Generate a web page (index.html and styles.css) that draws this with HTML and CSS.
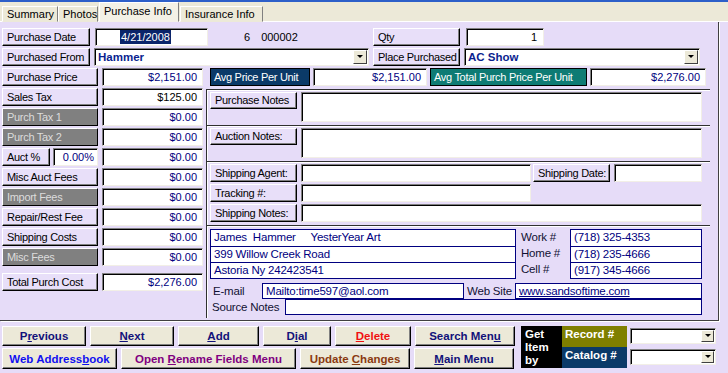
FILE: index.html
```html
<!DOCTYPE html>
<html lang="en">
<head>
    <meta charset="UTF-8">
    <title>Purchase Info</title>
    <link rel="stylesheet" href="styles.css">
</head>
<body>
    <div class="topline"></div>
    <div class="tabbar">
        <div class="tab t-summary">Summary</div>
        <div class="tab t-photos">Photos</div>
        <div class="tab t-purchase active">Purchase Info</div>
        <div class="tab t-insurance">Insurance Info</div>
    </div>

    <div class="panel">
        <!-- row 1 -->
        <div class="row">
            <div class="lbl w88">Purchase Date</div>
            <div class="fld date"><span class="sel">4/21/2008</span></div>
            <div class="ids"><span>6</span><span>000002</span></div>
            <div class="lbl w87 qtylbl">Qty</div>
            <div class="fld num qty">1</div>
        </div>
        <!-- row 2 -->
        <div class="row">
            <div class="lbl w88">Purchased From</div>
            <div class="fld combo from"><b>Hammer</b><span class="drop"></span></div>
            <div class="lbl w87">Place Purchased</div>
            <div class="fld combo place"><b>AC Show</b><span class="drop"></span></div>
        </div>

        <div class="main">
            <div class="left">
                <div class="row"><div class="lbl w96">Purchase Price</div><div class="fld num val">$2,151.00</div></div>
                <div class="row"><div class="lbl w96">Sales Tax</div><div class="fld num val black">$125.00</div></div>
                <div class="row"><div class="lbl w96 gray">Purch Tax 1</div><div class="fld num val">$0.00</div></div>
                <div class="row"><div class="lbl w96 gray">Purch Tax 2</div><div class="fld num val">$0.00</div></div>
                <div class="row">
                    <div class="lbl w48">Auct %</div>
                    <div class="fld num pct">0.00%</div>
                    <div class="fld num val">$0.00</div>
                </div>
                <div class="row"><div class="lbl w96">Misc Auct Fees</div><div class="fld num val">$0.00</div></div>
                <div class="row"><div class="lbl w96 gray">Import Fees</div><div class="fld num val">$0.00</div></div>
                <div class="row"><div class="lbl w96">Repair/Rest Fee</div><div class="fld num val">$0.00</div></div>
                <div class="row"><div class="lbl w96">Shipping Costs</div><div class="fld num val">$0.00</div></div>
                <div class="row"><div class="lbl w96 gray">Misc Fees</div><div class="fld num val">$0.00</div></div>
                <div class="row total"><div class="lbl w96">Total Purch Cost</div><div class="fld num val">$2,276.00</div></div>
            </div>

            <div class="right">
                <div class="row avg">
                    <div class="tag navy w100">Avg Price Per Unit</div>
                    <div class="fld num avg1">$2,151.00</div>
                    <div class="tag teal w157">Avg Total Purch Price Per Unit</div>
                    <div class="fld num avg2">$2,276.00</div>
                </div>

                <div class="box">
                    <div class="sec notes">
                        <div class="lbl w87">Purchase Notes</div>
                        <div class="fld memo"></div>
                    </div>
                    <div class="sec notes">
                        <div class="lbl w87">Auction Notes:</div>
                        <div class="fld memo"></div>
                    </div>
                    <div class="sec ship">
                        <div class="row">
                            <div class="lbl w87">Shipping Agent:</div>
                            <div class="fld agent"></div>
                            <div class="lbl w77">Shipping Date:</div>
                            <div class="fld shipdate"></div>
                        </div>
                        <div class="row">
                            <div class="lbl w87">Tracking #:</div>
                            <div class="fld agent"></div>
                        </div>
                        <div class="row">
                            <div class="lbl w87">Shipping Notes:</div>
                            <div class="fld wide"></div>
                        </div>
                    </div>
                    <div class="sec contact">
                        <div class="cgrid">
                            <div class="addr">
                                <div class="cell">James&nbsp; Hammer&nbsp;&nbsp;&nbsp;&nbsp; YesterYear Art</div>
                                <div class="cell">399 Willow Creek Road</div>
                                <div class="cell">Astoria Ny 242423541</div>
                            </div>
                            <div class="plabels">
                                <div>Work #</div>
                                <div>Home #</div>
                                <div>Cell #</div>
                            </div>
                            <div class="phones">
                                <div class="cell">(718) 325-4353</div>
                                <div class="cell">(718) 235-4666</div>
                                <div class="cell">(917) 345-4666</div>
                            </div>
                        </div>
                        <div class="crow">
                            <span class="clbl email">E-mail</span>
                            <div class="cell single mail">Mailto:time597@aol.com</div>
                            <span class="clbl web">Web Site</span>
                            <div class="cell single site"><u>www.sandsoftime.com</u></div>
                        </div>
                        <div class="crow">
                            <span class="clbl src">Source Notes</span>
                            <div class="cell single srcnotes"></div>
                        </div>
                    </div>
                </div>
            </div>
        </div>
    </div>

    <div class="footer">
        <div class="navbtns">
            <div class="brow">
                <div class="btn c-navy b84"><span>P<u>r</u>evious</span></div>
                <div class="btn c-navy b84"><span><u>N</u>ext</span></div>
                <div class="btn c-navy b81"><span><u>A</u>dd</span></div>
                <div class="btn c-navy b68"><span>D<u>i</u>al</span></div>
                <div class="btn c-red b76"><span><u>D</u>elete</span></div>
                <div class="btn c-navy b100"><span>Search Men<u>u</u></span></div>
            </div>
            <div class="brow">
                <div class="btn c-blue b115"><span>Web Address<u>b</u>ook</span></div>
                <div class="btn c-purple b175"><span>Open <u>R</u>ename Fields Menu</span></div>
                <div class="btn c-brown b110"><span>Update <u>C</u>hanges</span></div>
                <div class="btn c-navy b100"><span><u>M</u>ain Menu</span></div>
            </div>
        </div>
        <div class="getby">
            <div class="gb-title">Get<br>Item<br>by</div>
            <div class="gb-keys">
                <div class="gb-key olive">Record #</div>
                <div class="gb-key blue">Catalog #</div>
            </div>
            <div class="gb-combos">
                <div class="fld combo small"><span class="drop"></span></div>
                <div class="fld combo small"><span class="drop"></span></div>
            </div>
        </div>
    </div>
</body>
</html>
```

FILE: styles.css
```css
body {
    margin: 0;
    width: 728px;
    height: 373px;
    overflow: hidden;
    font-family: "Liberation Sans", Arial, sans-serif;
    font-size: 11px;
    color: #000;
    background-color: #e6dcf8;
}
.topline {
    height: 2px;
    background-color: #2d5fc9;
}

/* tabs */
.tabbar {
    height: 20px;
    background-color: #ece9d8;
    display: flex;
    align-items: flex-end;
    padding-left: 2px;
    box-sizing: border-box;
    border-bottom: 1px solid #fff;
}
.tab {
    height: 16px;
    line-height: 15px;
    box-sizing: border-box;
    border: 1px solid;
    border-color: #fff #808080 transparent #fff;
    padding-left: 4px;
    margin-bottom: -1px;
    background-color: #ece9d8;
    white-space: nowrap;
}
.t-summary { width: 56px; }
.t-photos { width: 40px; }
.t-purchase { width: 80px; }
.t-insurance { width: 83px; margin-left: 1px; }
.tab.active {
    height: 20px;
    line-height: 17px;
    margin-left: 1px;
    background-color: #f3f1e6;
    border-bottom-color: #f3f1e6;
    position: relative;
    z-index: 1;
}

/* main page */
.panel {
    width: 719px;
    height: 299px;
    box-sizing: border-box;
    padding: 6px 0 0 2px;
    border-right: 1px solid #404040;
    border-bottom: 1px solid #404040;
    box-shadow: 1px 1px 0 #fff;
}
.row {
    display: flex;
    height: 18px;
    margin-bottom: 2px;
}

.lbl {
    height: 18px;
    box-sizing: border-box;
    border: 1px solid;
    border-color: #fff #000 #000 #fff;
    box-shadow: inset -1px -1px 0 #808080;
    background-color: #e8dff9;
    padding-left: 4px;
    line-height: 16px;
    letter-spacing: -0.3px;
    white-space: nowrap;
    overflow: hidden;
    flex: none;
}
.lbl.gray {
    background-color: #808080;
    color: #dcdcdc;
}
.w48 { width: 48px; }
.w77 { width: 77px; }
.w87 { width: 87px; }
.w88 { width: 88px; }
.w96 { width: 96px; }
.w100 { width: 100px; }
.w157 { width: 157px; }

.fld {
    height: 18px;
    box-sizing: border-box;
    background-color: #fff;
    border: 1px solid;
    border-color: #808080 #f2efe6 #f2efe6 #808080;
    box-shadow: inset 1px 1px 0 #000;
    flex: none;
}
.num {
    text-align: right;
    padding-right: 5px;
    line-height: 16px;
    color: #000080;
}
.black { color: #000; }

.date {
    width: 113px;
    margin-left: 5px;
    padding-left: 24px;
    line-height: 16px;
}
.sel {
    background-color: #0a246a;
    color: #fff;
    padding: 1px 1px;
}
.ids {
    width: 165px;
    display: flex;
    line-height: 18px;
    padding-left: 36px;
    box-sizing: border-box;
    gap: 11px;
}
.qty {
    width: 78px;
    margin-left: 6px;
    color: #000;
    padding-right: 6px;
}

.combo {
    position: relative;
    padding-left: 3px;
    line-height: 16px;
    color: #0a1f8f;
}
.combo b { font-size: 11.5px; }
.from { width: 275px; margin: 0 4px; }
.place { width: 236px; margin-left: 4px; }
.drop {
    position: absolute;
    right: 1px;
    top: 1px;
    width: 14px;
    height: 14px;
    box-sizing: border-box;
    background-color: #ece9d8;
    border: 1px solid;
    border-color: #fff #404040 #404040 #fff;
}
.drop::after {
    content: "";
    position: absolute;
    left: 3px;
    top: 4px;
    border-left: 3px solid transparent;
    border-right: 3px solid transparent;
    border-top: 3px solid #000;
}

/* left column + right panel */
.main {
    display: flex;
}
.left {
    width: 204px;
    flex: none;
}
.left .val {
    width: 101px;
    margin-left: 4px;
}
.left .pct {
    width: 45px;
    margin-left: 3px;
    color: #000080;
    padding-right: 3px;
}
.left .total {
    margin-top: 7px;
}

.right {
    flex: none;
    width: 504px;
}
.avg {
    padding-left: 4px;
    margin-bottom: 3px;
}
.tag {
    height: 18px;
    box-sizing: border-box;
    border: 1px solid #000;
    color: #fff;
    padding-left: 3px;
    line-height: 16px;
    letter-spacing: -0.3px;
    white-space: nowrap;
    flex: none;
}
.navy { background-color: #0b3a68; }
.teal { background-color: #0e7b74; }
.avg1 { width: 114px; margin: 0 3px; }
.avg2 { width: 116px; margin-left: 3px; }

.box {
    border-left: 1px solid #303030;
    box-shadow: inset 1px 0 0 #fff;
}
.sec {
    border-top: 1px solid #303030;
    box-shadow: inset 0 1px 0 #fff;
    box-sizing: border-box;
    padding: 2px 0 0 3px;
}
.notes {
    height: 36px;
    display: flex;
}
.notes .lbl { height: 17px; line-height: 15px; }
.memo {
    width: 401px;
    height: 30px;
    margin-left: 4px;
}
.ship { height: 64px; }
.agent { width: 230px; margin: 0 2px 0 4px; }
.shipdate { width: 88px; margin-left: 4px; }
.wide { width: 401px; margin-left: 4px; }

.contact {
    height: 93px;
    padding-top: 3px;
}
.cgrid {
    display: flex;
}
.addr {
    width: 306px;
    border: 1px solid #000080;
    box-sizing: border-box;
}
.phones {
    width: 132px;
    border: 1px solid #000080;
    box-sizing: border-box;
}
.cell {
    height: 16px;
    line-height: 15px;
    padding-left: 3px;
    color: #000080;
    background-color: #fff;
    box-sizing: border-box;
    font-size: 11.5px;
    letter-spacing: -0.2px;
    white-space: nowrap;
}
.addr .cell + .cell,
.phones .cell + .cell {
    border-top: 1px solid #000080;
}
.plabels {
    width: 54px;
    padding-left: 5px;
    box-sizing: border-box;
    font-size: 11.5px;
    letter-spacing: -0.2px;
    color: #111133;
}
.plabels div {
    height: 16px;
    line-height: 16px;
}
.crow {
    display: flex;
    height: 16px;
    margin-top: 4px;
    align-items: center;
}
.crow + .crow { margin-top: 0; }
.clbl {
    font-size: 11.5px;
    letter-spacing: -0.2px;
    color: #111133;
    white-space: nowrap;
}
.single {
    border: 1px solid #000080;
    height: 16px;
}
.email { width: 52px; padding-left: 3px; box-sizing: border-box; }
.mail { width: 202px; }
.web { width: 51px; padding-left: 3px; box-sizing: border-box; }
.site { width: 187px; }
.src { width: 75px; padding-left: 2px; box-sizing: border-box; }
.srcnotes { width: 417px; }

/* bottom buttons */
.footer {
    display: flex;
    padding: 5px 0 0 2px;
}
.navbtns {
    width: 519px;
    flex: none;
}
.brow {
    display: flex;
    gap: 4px;
    margin-bottom: 2px;
}
.brow + .brow .btn { height: 21px; }
.btn {
    height: 20px;
    box-sizing: border-box;
    background-color: #ece9d8;
    border: 1px solid;
    border-color: #fff #000 #000 #fff;
    box-shadow: inset -1px -1px 0 #808080;
    font-weight: bold;
    font-size: 11.5px;
    display: flex;
    align-items: center;
    justify-content: center;
    white-space: nowrap;
    flex: none;
}
.b68 { width: 68px; }
.b76 { width: 76px; }
.b81 { width: 81px; }
.b84 { width: 84px; }
.b100 { width: 100px; }
.b110 { width: 110px; }
.b115 { width: 115px; }
.b175 { width: 175px; }
.c-navy { color: #12127a; }
.c-red { color: #f01010; }
.c-blue { color: #1010f0; }
.c-purple { color: #800080; }
.c-brown { color: #8a3a10; }

.getby {
    display: flex;
    height: 42px;
}
.gb-title {
    width: 41px;
    background-color: #000;
    color: #fff;
    font-weight: bold;
    font-size: 11.5px;
    line-height: 13px;
    padding: 2px 0 0 4px;
    box-sizing: border-box;
}
.gb-keys {
    width: 65px;
}
.gb-key {
    height: 21px;
    color: #fff;
    font-weight: bold;
    font-size: 11.5px;
    padding-left: 3px;
    line-height: 17px;
}
.olive { background-color: #7f7f00; }
.blue { background-color: #0b3a68; }
.gb-combos {
    padding: 2px 0 0 3px;
}
.combo.small {
    width: 86px;
    height: 16px;
    margin-bottom: 5px;
}
.combo.small .drop {
    width: 13px;
    height: 12px;
    top: 1px;
}
.combo.small .drop::after {
    left: 3px;
    top: 3px;
}
```
